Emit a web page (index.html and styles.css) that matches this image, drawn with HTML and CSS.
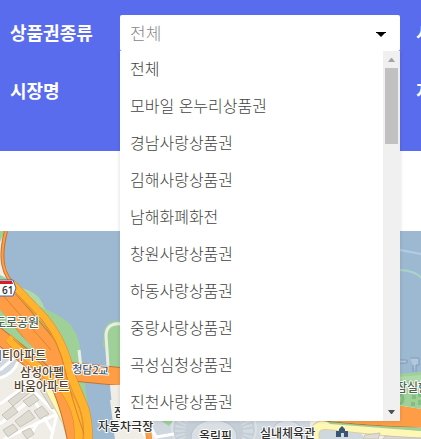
FILE: index.html
```html
<!DOCTYPE html>
<html lang="ko">
<head>
<meta charset="utf-8">
<meta name="viewport" content="width=device-width, initial-scale=1">
<title>가맹점 찾기</title>
<link rel="stylesheet" href="styles.css">
</head>
<body>
<form class="search">
  <label class="search-label" for="voucher">상품권종류</label>
  <div class="field">
    <select class="control" id="voucher"><option>전체</option></select>
    <svg class="caret" viewBox="0 0 10 5" aria-hidden="true"><path d="M0 0H10V1H9L5 5L1 1H0Z"/></svg>
    <div class="menu">
      <ul class="options">
        <li>전체</li>
        <li>모바일 온누리상품권</li>
        <li>경남사랑상품권</li>
        <li>김해사랑상품권</li>
        <li>남해화폐화전</li>
        <li>창원사랑상품권</li>
        <li>하동사랑상품권</li>
        <li>중랑사랑상품권</li>
        <li>곡성심청상품권</li>
        <li>진천사랑상품권</li>
      </ul>
      <div class="scrollbar" aria-hidden="true">
        <svg class="arrow arrow-up" viewBox="0 0 17 17"><path d="M5 11L8 7H9L12 11Z"/></svg>
        <div class="thumb"></div>
        <svg class="arrow arrow-down" viewBox="0 0 17 17"><path d="M5 6H12L9 10H8Z"/></svg>
      </div>
    </div>
  </div>
  <span class="search-label">시군</span>
  <label class="search-label" for="market">시장명</label>
  <input class="control" id="market" type="text">
  <span class="search-label">지역</span>
</form>
<main class="map">
  <svg class="map-view" viewBox="0 231 421 208" role="img" aria-label="지도">
    <rect class="land" y="231" width="421" height="208"/>
    <path class="water" d="M5 231H421V378H400L360 400H110L115 439H88L80 366L72 330L40 305L16 288L6 278L2 255Z"/>
    <!-- riverside parks -->
    <path class="park-light" d="M14 287Q38 289 44 307L50 316L30 312Z"/>
    <path class="park" d="M0 270L26 300Q36 304 45 309Q60 315 70 324Q76 332 79 342L83 366L85 385L93 439H60L0 340Z"/>
    <path class="park" d="M122 321Q106 319 104 332L103 346L107 352V368H122Z"/>
    <path class="path-line" d="M108 366L106 335Q107 322 122 324M79 350L81 369"/>
    <path class="land" d="M0 231H4Q-1 258 12 281L0 275Z"/>
    <path class="park" d="M0 231H5L0 242Z"/>
    <!-- apartment blocks -->
    <path class="land" d="M0 337L63 397L76 439H0Z"/>
    <path class="district" d="M0 337L24 354L14 369L0 378Z"/>
    <g class="street">
      <path d="M0 378Q13 374 18 362M0 370L15 357L27 367M0 404L46 371M24 382L57 414M4 439L57 414L51 439M28 439L37 424M32 396L53 433M0 424L34 397"/>
    </g>
    <g class="building">
      <path d="M8 401L24 389L29 393L13 406ZM23 401L34 394L39 400L29 407ZM2 415L13 406L18 412L7 420ZM15 421L29 410L35 418L20 427ZM34 411L42 406L49 414L40 419ZM3 430L13 424L18 430L8 437ZM40 390L47 386L61 404L52 409ZM22 432L30 428L34 434L27 439Z"/>
    </g>
    <path class="yellow-edge" d="M48 386L67 422L72 439"/>
    <path class="yellow-road" d="M48 386L67 422L72 439"/>
    <!-- expressway and bridge -->
    <path class="road-edge wide" d="M64 371L124 377"/>
    <path class="road wide" d="M64 371L124 377"/>
    <path class="road-edge narrow" d="M6 231C-1 258 2 274 17 289"/>
    <path class="road narrow" d="M6 231C-1 258 2 274 17 289"/>
    <path class="road-edge broad" d="M-5 288L20 316L46 347L64 372"/>
    <path class="road broad" d="M-5 288L20 316L46 347L64 372"/>
    <path class="road-edge middle" d="M-5 333L28 359L64 390"/>
    <path class="road middle" d="M-5 333L28 359L64 390"/>
    <path class="park" d="M-2 307L21 335L48 363L39 359L-2 320Z"/>
    <path class="road-edge broad" d="M58 374Q72 401 80 445"/>
    <path class="road broad" d="M58 374Q72 401 80 445"/>
    <path class="amber-edge" d="M11 283L45 319Q64 342 71 376L84 407Q89 421 88 444"/>
    <path class="amber" d="M11 283L45 319Q64 342 71 376L84 407Q89 421 88 444"/>
    <path class="amber-edge" d="M8 338L34 363L65 391Q82 414 78 444"/>
    <path class="amber" d="M8 338L34 363L65 391Q82 414 78 444"/>
    <path class="lane" d="M1 293L51 350M15 292L42 320Q59 341 65 370Q72 400 84 434M13 339L59 380"/>
    <!-- stadium district -->
    <path class="land" d="M110 385H124V439H115Z"/>
    <path class="district" d="M142 420H310L318 439H158Z"/>
    <path class="park" d="M160 420H174L169 426ZM207 437L215 430L222 439Z"/>
    <ellipse class="stadium" cx="214" cy="429" rx="42" ry="29"/>
    <ellipse class="stadium-ring" cx="214" cy="431" rx="34" ry="25"/>
    <ellipse class="stadium-core" cx="214" cy="437" rx="23" ry="17"/>
    <circle class="stadium-core" cx="287" cy="437" r="17"/>
    <path class="street" d="M145 416L156 437L174 434M135 419L147 439"/>
    <path class="amber-edge slim" d="M147 420L149 439"/>
    <path class="amber slim" d="M147 420L149 439"/>
    <path class="land" d="M310 420H421V439H310Z"/>
    <path class="district" d="M319 427L360 430L364 439H318Z"/>
    <path class="yellow-edge" d="M316 445Q310 424 327 425L421 435"/>
    <path class="yellow-road" d="M316 445Q310 424 327 425L421 435"/>
    <path class="park" d="M326 421Q350 417 421 428V431L330 424Z"/>
    <path class="road-edge" d="M303 418Q355 426 421 427V410L390 405Z"/>
    <path class="road-area" d="M306 418Q355 425 421 427V409L390 404Z"/>
    <path class="building" d="M365 435L380 433L378 439H363ZM385 436L421 438V439H383Z"/>
    <!-- east riverside -->
    <path class="park" d="M398 374L421 372V409L398 405Z"/>
    <path class="park-light" d="M398 377L421 375V380H398Z"/>
    <path class="park-mark" d="M412 395H416V399H412ZM418 393H421V397H418ZM411 402H415V406H411ZM418 400H421V405H418Z"/>
    <path class="park-ring" d="M397 396Q403 393 403 399Q403 404 397 404"/>
    <path class="ferry" d="M400 250L421 254"/>
    <path class="ferry ferry-green" d="M400 270Q416 271 421 278"/>
    <path class="pier" d="M399 360H407V363H399ZM410 358H419V365H416V372M413 365V372"/>
    <!-- route shield -->
    <path class="shield" d="M-2 280H13L16 288L13 296H-2Z"/>
    <path class="shield-top" d="M0 281H12L13 284H0Z"/>
    <path class="pin" d="M336 437V431H339V429L342 426L345 429V431H348V437H344V433H341V437Z"/>
    <g class="place">
      <text class="route" x="2" y="294">61</text>
      <text class="green-name" x="-5" y="327">도로공원</text>
      <text x="-9" y="360">시티아파트</text>
      <text x="20" y="377">삼성아펠</text>
      <text x="14" y="391">바움아파트</text>
      <text class="bridge" x="72" y="373" transform="rotate(3 72 373)">청담2교</text>
      <text class="dark" x="114" y="417">잠실</text>
      <text class="dark" x="98" y="431">자동차극장</text>
      <text class="dark" x="199" y="441">올림픽</text>
      <text class="dark" x="260" y="438">실내체육관</text>
      <text class="green-name" x="396" y="392">잠실한강</text>
    </g>
  </svg>
</main>
</body>
</html>
```

FILE: styles.css
```css
* {
  box-sizing: border-box;
}

body {
  margin: 0;
  overflow: hidden;
  background: #fff;
  font-family: "Noto Sans CJK KR", sans-serif;
}

.search {
  display: grid;
  grid-template-columns: 110px 280px minmax(0, 1fr);
  grid-auto-rows: 36px;
  row-gap: 22px;
  align-items: center;
  padding: 15px 0 42px 10px;
  background: #5a6cee;
}

.search-label {
  overflow: hidden;
  padding-bottom: 2px;
  color: #fff;
  font-size: 18px;
  font-weight: 700;
  line-height: 34px;
  white-space: nowrap;
}

.search-label:nth-child(3n) {
  padding-left: 16px;
}

.field {
  position: relative;
}

.control {
  display: block;
  width: 100%;
  height: 36px;
  padding: 0 10px 2px;
  border: 0;
  border-radius: 2px;
  appearance: none;
  background: #fff;
  color: #888;
  font-family: inherit;
  font-size: 17px;
  font-weight: 300;
}

.caret {
  position: absolute;
  top: 17px;
  right: 14px;
  width: 10px;
  height: 5px;
}

.menu {
  position: absolute;
  z-index: 1;
  top: 100%;
  left: 0;
  display: flex;
  width: 100%;
  background: #fff;
  box-shadow: 0 0 4px rgba(0, 0, 0, 0.15);
  clip-path: inset(0 -6px -6px -6px);
}

.options {
  flex: 1;
  margin: 0;
  padding: 0;
  color: #444;
  font-size: 16px;
  font-weight: 300;
  line-height: 35px;
  list-style: none;
}

.options li {
  padding: 0 0 2px 10px;
}

.scrollbar {
  display: flex;
  flex-direction: column;
  width: 17px;
  background: #f0f0f0;
}

.thumb {
  height: 76px;
  margin: 0 2px;
  background: #c1c1c1;
}

.arrow {
  width: 17px;
  height: 17px;
}

.arrow-up {
  fill: #a3a3a3;
}

.arrow-down {
  margin-top: auto;
  fill: #505050;
}

.map {
  margin-top: 80px;
}

.map-view {
  display: block;
  width: 100%;
  height: auto;
  fill: none;
}

.land { fill: #efede6; }
.water { fill: #9db9d1; }
.park { fill: #9fd097; }
.park-light { fill: #b0d9a8; }
.park-mark { fill: #83bd82; }
.park-ring { stroke: #83bd82; stroke-width: 3; }
.path-line { stroke: #e9eee5; stroke-width: 3; }
.district { fill: #d0d8df; }
.street { stroke: #fff; stroke-width: 3; }
.building { fill: #dedbd3; stroke: #c6c2b9; stroke-width: 1; }
.yellow-edge { stroke: #d9cf9e; stroke-width: 10; }
.yellow-road { stroke: #fff7b5; stroke-width: 8; }
.road { stroke: #ff9d47; }
.road-area { fill: #ff9d47; }
.road-edge { stroke: #c17532; stroke-width: 1; }
.road.wide { stroke-width: 17; }
.road-edge.wide { stroke-width: 19; }
.road.broad { stroke-width: 22; }
.road-edge.broad { stroke-width: 24; }
.road.middle { stroke-width: 14; }
.road-edge.middle { stroke-width: 16; }
.road.narrow { stroke-width: 2; }
.road-edge.narrow { stroke-width: 4; }
.amber-edge { stroke: #d98a2c; stroke-width: 9; }
.amber { stroke: #ffb32f; stroke-width: 8; }
.amber-edge.slim { stroke-width: 6; }
.amber.slim { stroke: #ff9d47; stroke-width: 5; }
.lane { stroke: #d9852c; stroke-width: 1; }
.stadium { fill: #c5ced6; stroke: #dde2e6; stroke-width: 2; }
.stadium-ring { stroke: #d3dae0; stroke-width: 10; stroke-dasharray: 2 2; }
.stadium-core { fill: #d9dfe4; stroke: #b9c3cc; stroke-width: 1; }
.ferry { stroke: #b4cbe8; stroke-width: 2; }
.ferry-green { stroke: #a8d5c5; }
.pier { fill: #b3c8dc; stroke: #7e9ab8; stroke-width: 1; }
.shield { fill: #fff; stroke: #4668c0; stroke-width: 1; }
.shield-top { fill: #dd1c1c; }
.pin { fill: #385577; }

.place {
  fill: #55432f;
  stroke: #fff;
  stroke-width: 2px;
  stroke-linejoin: round;
  paint-order: stroke;
  font-size: 12px;
  font-weight: 500;
}

.place .dark { fill: #2d2d2d; }
.place .green-name { fill: #4d6650; }
.place .bridge { fill: #46566b; font-size: 11px; }

.place .route {
  fill: #333;
  stroke: none;
  font-family: "Open Sans", sans-serif;
  font-size: 10px;
  font-weight: 600;
}
```
